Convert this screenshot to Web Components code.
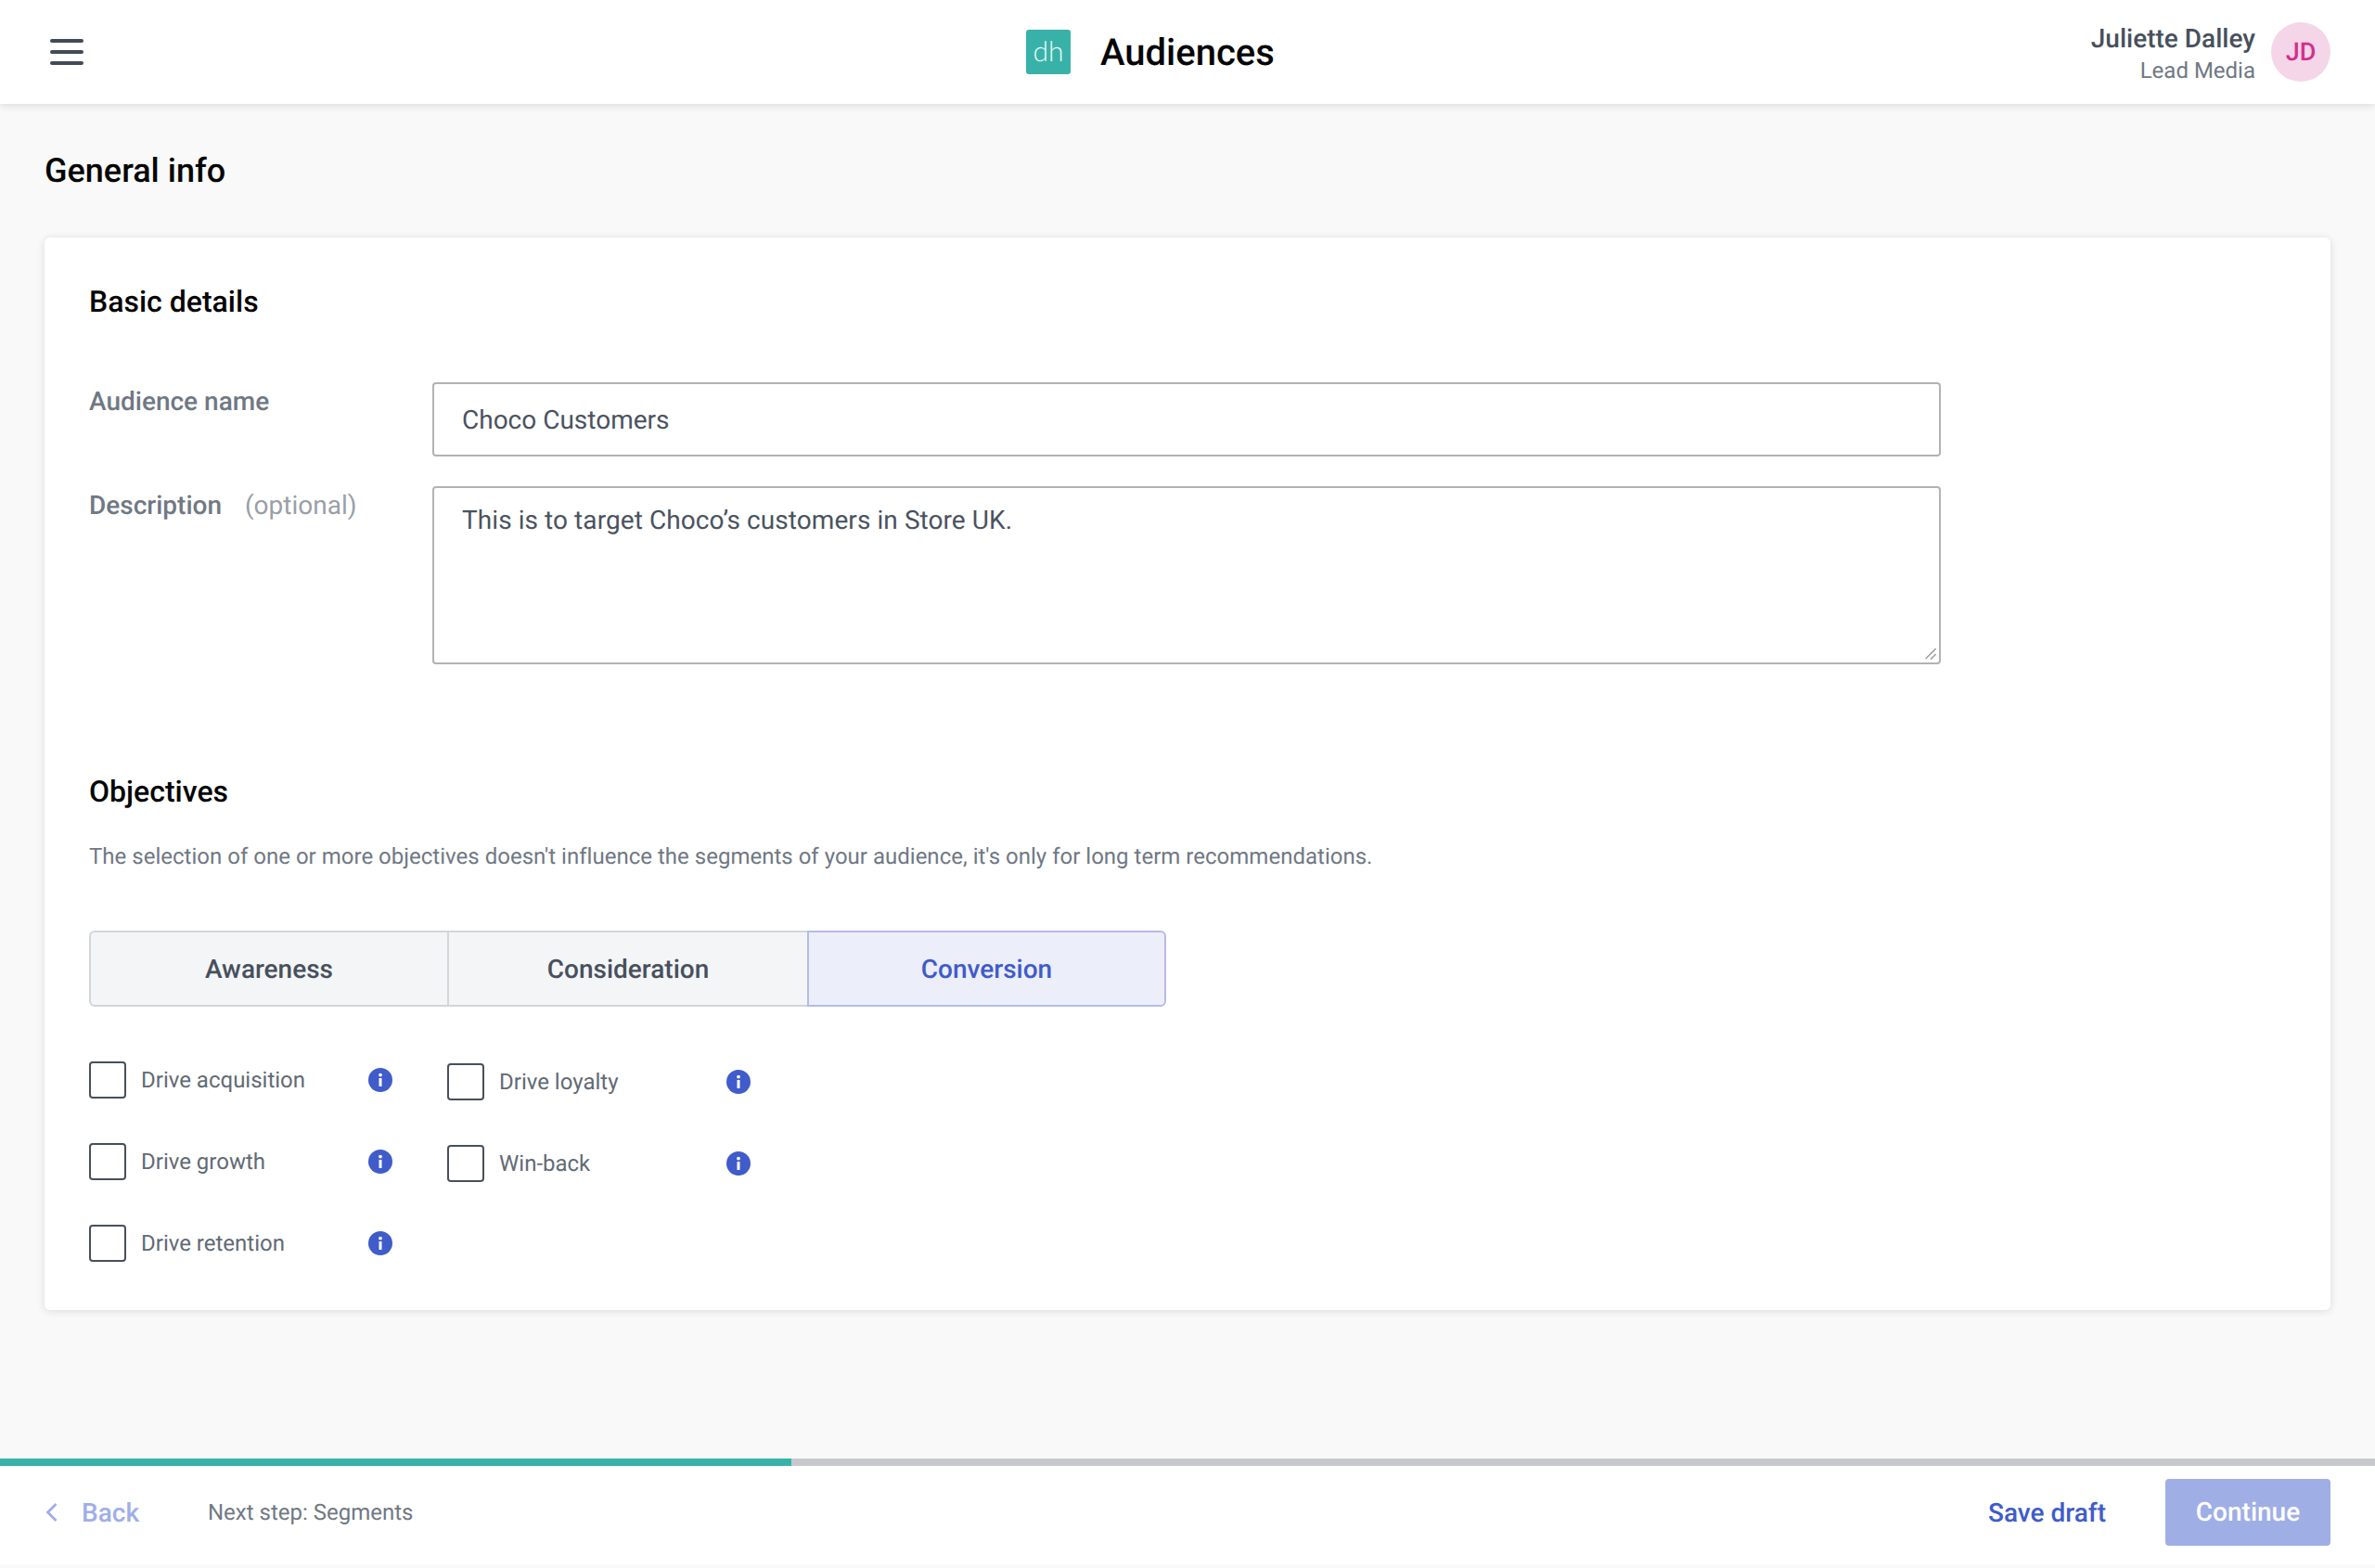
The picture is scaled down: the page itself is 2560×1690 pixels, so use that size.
<!DOCTYPE html>
<html lang="en">
<head>
<meta charset="utf-8">
<title>Audiences</title>
<style>
  html, body { margin: 0; height: 100%; }
  body {
    background: #f9f9f9;
    font-family: Roboto, "Liberation Sans", sans-serif;
    color: #47505c;
    display: flex;
    flex-direction: column;
    height: 1690px;
    overflow: hidden;
    text-rendering: geometricPrecision;
  }
  audience-page { flex: 1; }
</style>
</head>
<body>
<app-header title="Audiences" user="Juliette Dalley" role="Lead Media" initials="JD"></app-header>
<audience-page>
  <form-card>
    <section-block heading="Basic details">
      <form-row label="Audience name"><text-box>Choco Customers</text-box></form-row>
      <form-row label="Description" hint="(optional)"><area-box>This is to target Choco’s customers in Store UK.</area-box></form-row>
    </section-block>
    <objectives-block></objectives-block>
  </form-card>
</audience-page>
<wizard-footer next="Next step: Segments"></wizard-footer>

<script>
class AppHeader extends HTMLElement {
  constructor() {
    super();
    this.attachShadow({ mode: "open" });
    this.shadowRoot.innerHTML = `
      <style>
        :host {
          display: grid;
          grid-template-columns: 1052px auto 1fr;
          align-items: center;
          height: 112px;
          padding: 0 48px 0 54px;
          background: #fff;
          box-shadow: 0 2px 8px rgba(30, 35, 45, 0.14);
          position: relative;
        }
        .menu { display: block; width: 36px; height: 28px; }
        .brand { display: flex; align-items: center; gap: 32px; }
        .logo {
          width: 48px; height: 48px; border-radius: 3px; background: #38b2a9;
          color: #eafaf8; font: 300 30px/46px Lato, "Open Sans", sans-serif;
          text-align: center;
        }
        .title { font-size: 40px; font-weight: 500; color: #050505; }
        .user { display: flex; justify-content: flex-end; align-items: center; gap: 17px; }
        .who { text-align: right; margin-top: 3px; }
        .name { font-size: 28px; font-weight: 500; line-height: 36px; color: #47505c; }
        .role { font-size: 24px; line-height: 32px; color: #707884; }
        .avatar {
          width: 64px; height: 64px; border-radius: 50%; background: #f5d6e9;
          color: #d1308c; font-size: 27px; font-weight: 500; line-height: 64px; text-align: center;
        }
      </style>
      <svg class="menu" viewBox="0 0 36 28" aria-hidden="true">
        <g fill="#414b57">
          <rect x="0" y="0" width="36" height="4" rx="2"></rect>
          <rect x="0" y="12" width="36" height="4" rx="2"></rect>
          <rect x="0" y="24" width="36" height="4" rx="2"></rect>
        </g>
      </svg>
      <div class="brand">
        <div class="logo">dh</div>
        <div class="title"></div>
      </div>
      <div class="user">
        <div class="who"><div class="name"></div><div class="role"></div></div>
        <div class="avatar"></div>
      </div>
    `;
  }

  connectedCallback() {
    const root = this.shadowRoot;
    root.querySelector(".title").textContent = this.getAttribute("title");
    root.querySelector(".name").textContent = this.getAttribute("user");
    root.querySelector(".role").textContent = this.getAttribute("role");
    root.querySelector(".avatar").textContent = this.getAttribute("initials");
  }
}

class AudiencePage extends HTMLElement {
  constructor() {
    super();
    this.attachShadow({ mode: "open" });
    this.shadowRoot.innerHTML = `
      <style>
        :host { display: block; padding: 49px 48px 0; }
        h1 { margin: 0 0 49px; font-size: 36px; line-height: 46px; font-weight: 500; color: #050505; }
      </style>
      <h1>General info</h1>
      <slot></slot>
    `;
  }
}

class FormCard extends HTMLElement {
  constructor() {
    super();
    this.attachShadow({ mode: "open" });
    this.shadowRoot.innerHTML = `
      <style>
        :host {
          display: block;
          height: 1156px;
          box-sizing: border-box;
          padding: 49px 48px 0;
          background: #fff;
          border-radius: 6px;
          box-shadow: 0 1px 8px rgba(30, 35, 45, 0.14);
        }
      </style>
      <slot></slot>
    `;
  }
}

class SectionBlock extends HTMLElement {
  constructor() {
    super();
    this.attachShadow({ mode: "open" });
    this.shadowRoot.innerHTML = `
      <style>
        :host { display: block; }
        h2 { margin: 0 0 67px; font-size: 32px; line-height: 40px; font-weight: 500; color: #050505; }
      </style>
      <h2></h2>
      <slot></slot>
    `;
  }

  connectedCallback() {
    this.shadowRoot.querySelector("h2").textContent = this.getAttribute("heading");
  }
}

class FormRow extends HTMLElement {
  constructor() {
    super();
    this.attachShadow({ mode: "open" });
    this.shadowRoot.innerHTML = `
      <style>
        :host {
          display: grid;
          grid-template-columns: 370px 1626px;
          margin-bottom: 32px;
        }
        .label { font-size: 28px; line-height: 36px; font-weight: 500; color: #707884; padding-top: 3px; }
        .hint { font-weight: 400; color: #9a9fa7; margin-left: 25px; }
      </style>
      <div class="label"><span class="main"></span><span class="hint"></span></div>
      <slot></slot>
    `;
  }

  connectedCallback() {
    this.shadowRoot.querySelector(".main").textContent = this.getAttribute("label");
    this.shadowRoot.querySelector(".hint").textContent = this.getAttribute("hint") || "";
  }
}

class TextBox extends HTMLElement {
  constructor() {
    super();
    this.attachShadow({ mode: "open" });
    this.shadowRoot.innerHTML = `
      <style>
        :host {
          display: block;
          box-sizing: border-box;
          height: 80px;
          padding: 0 30px;
          border: 2px solid #b0b3b6;
          border-radius: 4px;
          font-size: 28px;
          line-height: 78px;
          color: #4a535f;
        }
      </style>
      <slot></slot>
    `;
  }
}

class AreaBox extends HTMLElement {
  constructor() {
    super();
    this.attachShadow({ mode: "open" });
    this.shadowRoot.innerHTML = `
      <style>
        :host { display: block; position: relative; height: 192px; }
        textarea {
          display: block;
          box-sizing: border-box;
          width: 100%;
          height: 192px;
          margin: 0;
          padding: 17px 30px;
          border: 2px solid #b0b3b6;
          border-radius: 4px;
          outline: none;
          resize: none;
          font: 400 28px/36px Roboto, "Liberation Sans", sans-serif;
          letter-spacing: 0.07px;
          text-rendering: geometricPrecision;
          color: #4a535f;
          background: #fff;
        }
        svg { position: absolute; right: 2px; bottom: 2px; display: block; }
      </style>
      <textarea></textarea>
      <svg width="16" height="16" viewBox="0 0 16 16" aria-hidden="true">
        <path d="M1.7 12 L12.7 1 M7 12.7 L12.7 7" fill="none" stroke="#9a9da1" stroke-width="1.5"></path>
      </svg>
    `;
  }

  connectedCallback() {
    this.shadowRoot.querySelector("textarea").textContent = this.textContent;
  }
}

class ObjectiveTabs extends HTMLElement {
  static get observedAttributes() {
    return ["active"];
  }

  constructor() {
    super();
    this.attachShadow({ mode: "open" });
    this.shadowRoot.innerHTML = `
      <style>
        :host { display: flex; width: 1161px; height: 82px; }
        button {
          box-sizing: border-box;
          flex: none;
          margin: 0 0 0 -2px;
          padding: 0;
          border: 2px solid #d4d5d8;
          background: #f4f5f7;
          font: 500 28px Roboto, "Liberation Sans", sans-serif;
          text-rendering: geometricPrecision;
          color: #47505c;
        }
        button:nth-child(2) { width: 388px; }
        button:nth-child(3) { width: 390px; }
        button:nth-child(4) { width: 387px; }
        button:nth-child(2) { margin-left: 0; border-radius: 6px 0 0 6px; }
        button:last-child { border-radius: 0 6px 6px 0; }
        button.active {
          position: relative;
          background: #eceefa;
          border-color: #b3bce9;
          color: #405bca;
        }
      </style>
    `;
    ["Awareness", "Consideration", "Conversion"].forEach((label) => {
      const btn = document.createElement("button");
      btn.textContent = label;
      this.shadowRoot.appendChild(btn);
    });
  }

  attributeChangedCallback() {
    this.shadowRoot.querySelectorAll("button").forEach((btn) => {
      btn.classList.toggle("active", btn.textContent === this.getAttribute("active"));
    });
  }
}

class InfoIcon extends HTMLElement {
  constructor() {
    super();
    this.attachShadow({ mode: "open" });
    this.shadowRoot.innerHTML = `
      <style>
        :host { display: block; width: 26px; height: 26px; }
        svg { display: block; }
      </style>
      <svg width="26" height="26" viewBox="0 0 26 26" aria-hidden="true">
        <circle cx="13" cy="13" r="13" fill="#405bca"></circle>
        <circle cx="13" cy="7.6" r="1.9" fill="#fff"></circle>
        <rect x="11.5" y="11" width="3" height="9" rx="0.6" fill="#fff"></rect>
      </svg>
    `;
  }
}

class CheckItem extends HTMLElement {
  constructor() {
    super();
    this.attachShadow({ mode: "open" });
    this.shadowRoot.innerHTML = `
      <style>
        :host { display: flex; align-items: center; height: 40px; }
        .box {
          box-sizing: border-box;
          width: 40px;
          height: 40px;
          border: 2px solid #47505c;
          border-radius: 4px;
          background: #fff;
        }
        .text { margin-left: 16px; flex: 1; font-size: 24px; color: #626a75; }
      </style>
      <div class="box"></div>
      <div class="text"></div>
      <info-icon></info-icon>
    `;
  }

  connectedCallback() {
    this.shadowRoot.querySelector(".text").textContent = this.getAttribute("label");
  }
}

class ObjectivesBlock extends HTMLElement {
  constructor() {
    super();
    this.attachShadow({ mode: "open" });
    this.shadowRoot.innerHTML = `
      <style>
        :host { display: block; margin-top: 117px; }
        h2 { margin: 0; font-size: 32px; line-height: 40px; font-weight: 500; color: #050505; }
        p { margin: 33px 0 63px; font-size: 24px; line-height: 34px; letter-spacing: 0.012px; color: #707884; }
        .grid { display: flex; margin-top: 59px; }
        .col { display: flex; flex-direction: column; gap: 48px; width: 327px; margin-right: 59px; }
        .col + .col { margin-top: 2px; }
      </style>
      <h2>Objectives</h2>
      <p>The selection of one or more objectives doesn't influence the segments of your audience, it's only for long term recommendations.</p>
      <objective-tabs active="Conversion"></objective-tabs>
      <div class="grid">
        <div class="col">
          <check-item label="Drive acquisition"></check-item>
          <check-item label="Drive growth"></check-item>
          <check-item label="Drive retention"></check-item>
        </div>
        <div class="col">
          <check-item label="Drive loyalty"></check-item>
          <check-item label="Win-back"></check-item>
        </div>
      </div>
    `;
  }
}

class WizardFooter extends HTMLElement {
  constructor() {
    super();
    this.attachShadow({ mode: "open" });
    this.shadowRoot.innerHTML = `
      <style>
        :host { display: block; margin-bottom: 4px; background: #fff; }
        .track { height: 8px; background: #c7c8cc; }
        .fill { width: 33.33%; height: 8px; background: #38b2a9; }
        .bar { display: flex; align-items: center; height: 100px; padding: 0 48px 6px; }
        .back { display: flex; align-items: center; gap: 24px; color: #a0aee6; font-size: 28px; font-weight: 500; }
        .back svg { display: block; }
        .next { margin-left: 74px; font-size: 24px; color: #707884; flex: 1; }
        .save { font-size: 28px; font-weight: 500; color: #405bca; margin-right: 64px; }
        .cont {
          width: 178px; height: 72px; border-radius: 4px; background: #a0aee6; color: #fff;
          font-size: 28px; font-weight: 500; line-height: 72px; text-align: center;
        }
      </style>
      <div class="track"><div class="fill"></div></div>
      <div class="bar">
        <div class="back">
          <svg width="16" height="22" viewBox="0 0 16 22" aria-hidden="true">
            <path d="M12.5 2 L3.5 11 L12.5 20" fill="none" stroke="#a0aee6" stroke-width="2.8"></path>
          </svg>
          <span>Back</span>
        </div>
        <div class="next"></div>
        <div class="save">Save draft</div>
        <div class="cont">Continue</div>
      </div>
    `;
  }

  connectedCallback() {
    this.shadowRoot.querySelector(".next").textContent = this.getAttribute("next");
  }
}

customElements.define("info-icon", InfoIcon);
customElements.define("check-item", CheckItem);
customElements.define("objective-tabs", ObjectiveTabs);
customElements.define("objectives-block", ObjectivesBlock);
customElements.define("app-header", AppHeader);
customElements.define("audience-page", AudiencePage);
customElements.define("form-card", FormCard);
customElements.define("section-block", SectionBlock);
customElements.define("form-row", FormRow);
customElements.define("text-box", TextBox);
customElements.define("area-box", AreaBox);
customElements.define("wizard-footer", WizardFooter);
</script>
</body>
</html>
